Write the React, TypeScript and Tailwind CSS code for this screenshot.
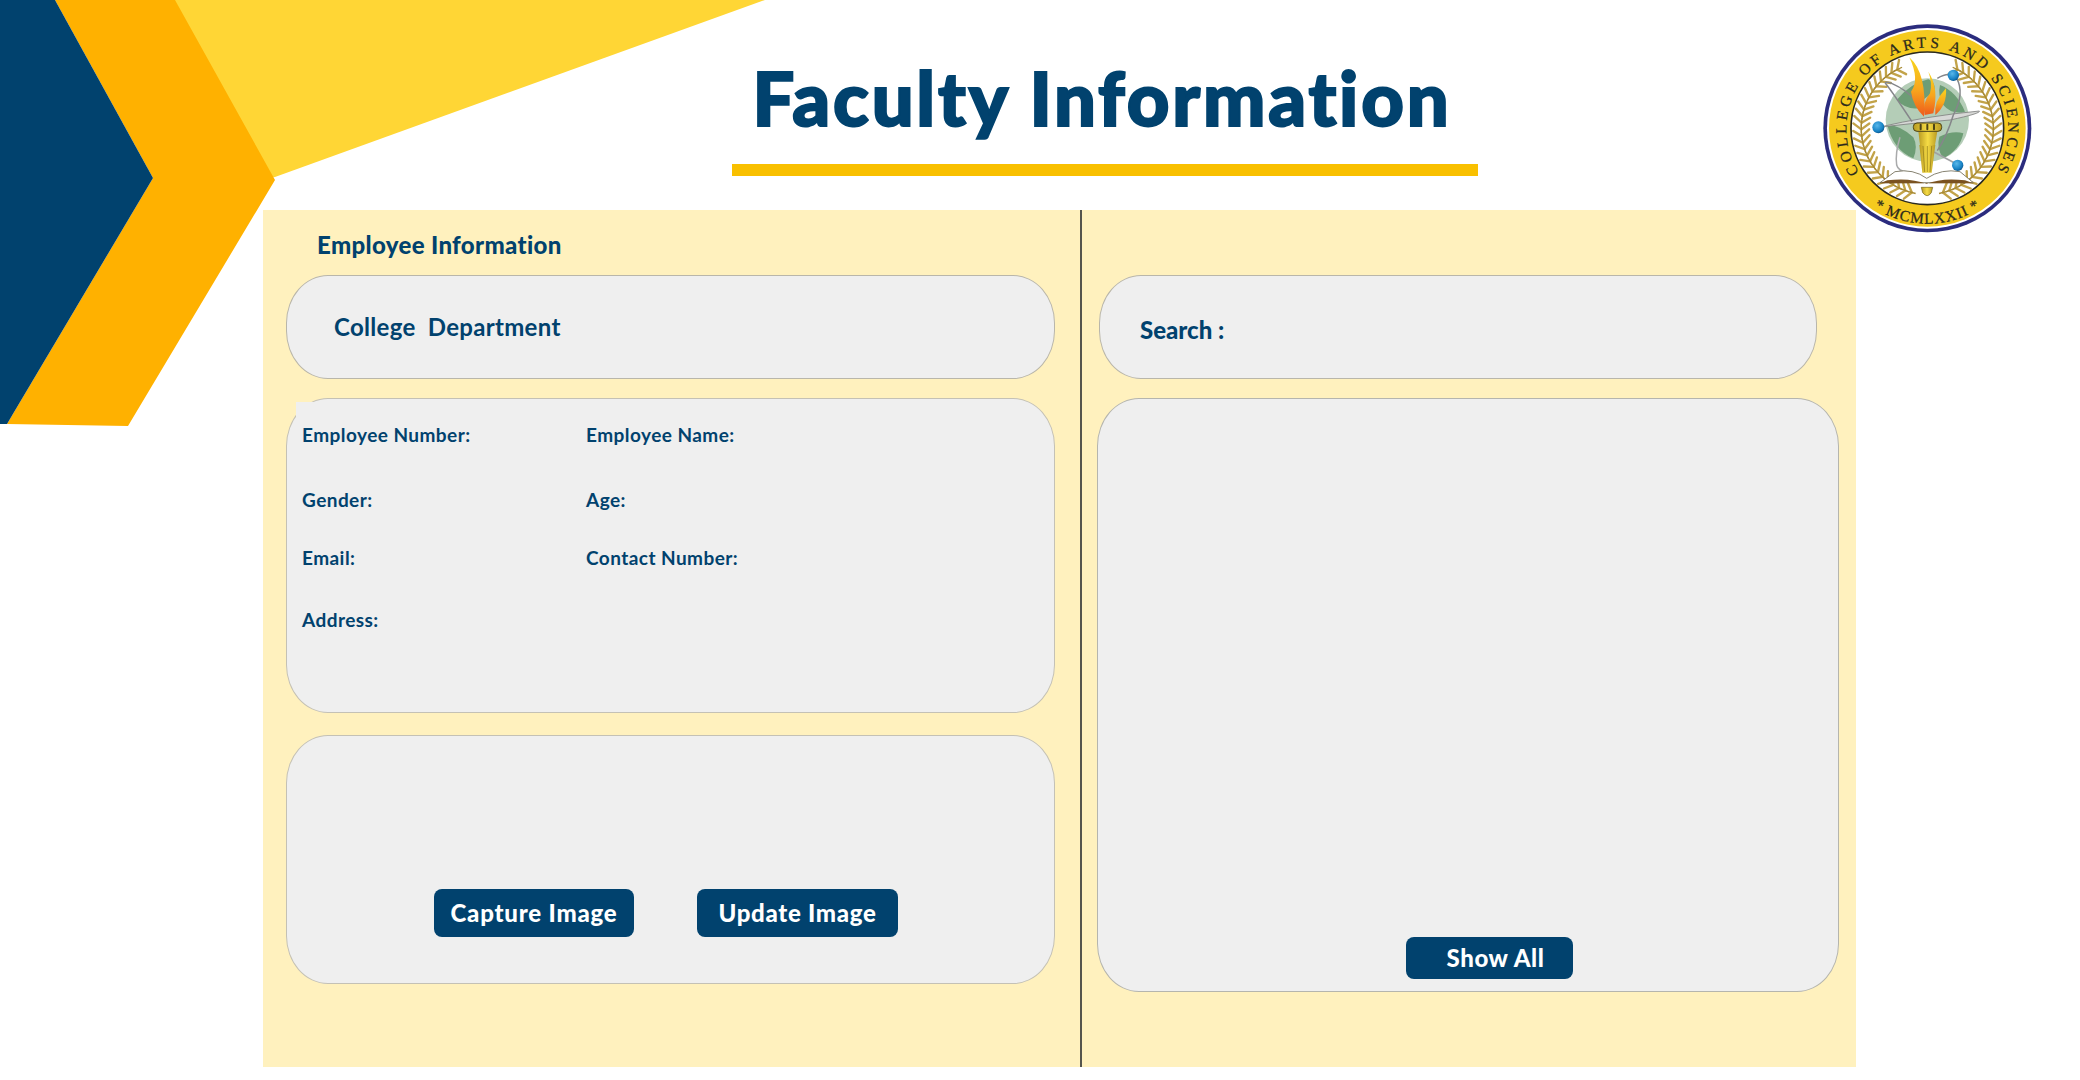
const NAVY = "#01426e";

function Logo() {
  const cx = 442, cy = 385;
  const leaves = (side: number) =>
    Array.from({ length: 25 }).map((_, i) => {
      const deg = -64 + i * 5.8;
      const a = (Math.PI / 180) * deg;
      const r = 198;
      const x = cx + side * r * Math.cos(a);
      const y = cy + r * Math.sin(a);
      return (
        <g key={i} transform={`translate(${x} ${y}) rotate(${side * deg})`}>
          <path d="M0 4 L-24 -14" stroke="#c2a349" strokeWidth="7" strokeLinecap="round" />
          <path d="M0 4 L24 -14" stroke="#c2a349" strokeWidth="7" strokeLinecap="round" />
          <path d="M0 -12 L0 16" stroke="#a88a35" strokeWidth="4" />
        </g>
      );
    });
  return (
    <svg viewBox="0 0 900 780" className="absolute left-[1780px] top-0 w-[300px] h-[260px]">
      <defs>
        <path id="logo-top" d="M 238 518 A 243 243 0 1 1 641 525" />
        <path id="logo-bottom" d="M 235 583 A 287 287 0 0 0 649 583" />
        <linearGradient id="logo-flame" x1="0" y1="0" x2="0" y2="1">
          <stop offset="0" stopColor="#f7d61e" />
          <stop offset="0.55" stopColor="#f8a51d" />
          <stop offset="1" stopColor="#ee5a1c" />
        </linearGradient>
        <linearGradient id="logo-gold" x1="0" y1="0" x2="1" y2="0">
          <stop offset="0" stopColor="#b89a22" />
          <stop offset="0.5" stopColor="#f6dc45" />
          <stop offset="1" stopColor="#b89a22" />
        </linearGradient>
        <radialGradient id="logo-ball" cx="0.4" cy="0.35" r="0.7">
          <stop offset="0" stopColor="#58b7ea" />
          <stop offset="0.7" stopColor="#1681c4" />
          <stop offset="1" stopColor="#0c4d80" />
        </radialGradient>
      </defs>
      <circle cx={cx} cy={cy} r="312" fill="#2b2c7e" />
      <circle cx={cx} cy={cy} r="301" fill="#fff" />
      <circle cx={cx} cy={cy} r="295" fill="#f5ca1e" />
      <circle cx={cx} cy={cy} r="229" fill="#fff" stroke="#2a2a20" strokeWidth="5" />
      <text fontFamily="'Liberation Serif', serif" fontSize="46" fontWeight="400" stroke="#2c2a1c" strokeWidth="0.8" fill="#2c2a1c" letterSpacing="10.8">
        <textPath href="#logo-top" startOffset="0">COLLEGE OF ARTS AND SCIENCES</textPath>
      </text>
      <text fontFamily="'Liberation Serif', serif" fontSize="46" fontWeight="400" stroke="#2c2a1c" strokeWidth="0.8" fill="#2c2a1c" letterSpacing="3" textAnchor="middle">
        <textPath href="#logo-bottom" startOffset="50%">*  MCMLXXII  *</textPath>
      </text>
      {leaves(-1)}
      {leaves(1)}
      <g transform="translate(210 150)">
        <circle cx="232" cy="210" r="125" fill="#b4cdb7" />
        <path d="M140 150 Q180 100 235 88 Q262 100 250 130 Q220 140 205 175 Q170 180 140 150z M112 225 Q150 225 190 262 Q205 290 190 325 Q130 300 112 225z M270 105 Q320 125 345 185 Q305 195 280 165 Q262 135 270 105z M268 260 Q310 240 340 250 Q330 300 280 325 Q258 295 268 260z" fill="#6d9d75" />
        <path d="M85 232 Q230 198 388 183 Q394 190 300 210 Q200 218 85 232z" fill="#d7d8d6" stroke="#80817f" strokeWidth="2.5" />
        <path d="M186 215 Q130 130 108 102 Q100 92 125 100 Q170 120 195 150" fill="none" stroke="#85868a" strokeWidth="4.5" />
        <path d="M252 306 L325 345" fill="none" stroke="#a0a1a3" strokeWidth="5" />
        <path d="M262 85 Q300 62 320 85 Q345 130 310 195 Q290 260 262 302" fill="none" stroke="#85868a" strokeWidth="4.5" />
        <path d="M150 262 Q135 310 140 345 Q145 365 172 365" fill="none" stroke="#a9aaab" strokeWidth="4.5" />
        <circle cx="310" cy="76" r="17" fill="url(#logo-ball)" />
        <circle cx="85" cy="232" r="18" fill="url(#logo-ball)" />
        <circle cx="323" cy="346" r="17" fill="url(#logo-ball)" />
        <path d="M178 22 Q232 70 222 200 Q190 170 183 125 Q210 90 178 22z" fill="url(#logo-flame)" />
        <path d="M235 65 Q268 115 250 190 L224 195 Q215 160 240 130 Q248 100 235 65z" fill="url(#logo-flame)" />
        <path d="M288 115 Q292 165 256 195 Q250 155 288 115z" fill="url(#logo-flame)" />
        <path d="M205 244 L262 244 L255 285 L210 285z" fill="url(#logo-gold)" />
        <path d="M208 285 L256 285 L245 368 L217 368z" fill="url(#logo-gold)" />
        <path d="M219 288 L224 366 M232 288 L232 366 M245 288 L240 366" stroke="#8a7418" strokeWidth="2" />
        <rect x="190" y="219" width="85" height="25" rx="11" fill="url(#logo-gold)" stroke="#4c4316" strokeWidth="3" />
        <path d="M212 224 V238 M232 224 V238 M252 224 V238" stroke="#4c4316" strokeWidth="6" strokeLinecap="round" />
        <path d="M135 365 Q190 355 230 385 Q275 355 330 365 L370 398 L90 398z" fill="#fff" stroke="#6f6a56" strokeWidth="2.5" />
        <path d="M90 400 L370 400 L345 391 Q275 382 230 402 Q180 382 112 391z" fill="#7a5220" />
        <path d="M214 412 L248 412 L244 428 Q232 446 218 428z" fill="url(#logo-gold)" stroke="#6e5f18" strokeWidth="2" />
      </g>
    </svg>
  );
}

function Chevrons() {
  return (
    <svg viewBox="0 0 800 440" className="absolute left-0 top-0 w-[800px] h-[440px]">
      <polygon points="165,0 765,0 275,177 270,178" fill="#ffd635" />
      <polygon points="55,0 175,0 275,180 128,426 7,424 153,178" fill="#ffb100" />
      <polygon points="0,0 55,0 153,178 7,424 0,424" fill={NAVY} />
    </svg>
  );
}

function Field({ label, className = "" }: { label: string; className?: string }) {
  return <div className={`text-[19px] leading-[30px] font-bold text-[#01426e] tracking-[0.45px] ${className}`}>{label}</div>;
}

export default function App() {
  return (
    <div className="relative w-[2080px] h-[1080px] overflow-hidden bg-white font-['Lato','Noto_Sans',sans-serif]">
      <Chevrons />
      <header className="relative h-[210px] pl-[732px]">
        <div className="flex flex-col w-[746px] items-center">
          <h1 className="mt-[56px] mr-[6px] h-[84px] text-[74px] leading-[84px] font-black text-[#01426e] tracking-[2.8px] [-webkit-text-stroke:2px_#01426e]">
            Faculty Information
          </h1>
          <div className="mt-[24px] h-[12px] w-full bg-[#f9c000]" />
        </div>
      </header>
      <main className="relative ml-[263px] w-[1593px] h-[857px] flex bg-[#fff1be]">
        <section className="w-[817px] pl-[23px] pt-[20px]">
          <h2 className="ml-[31px] h-[30px] text-[24px] leading-[30px] font-black text-[#01426e] tracking-[0.35px]">
            Employee Information
          </h2>
          <div className="mt-[15px] w-[769px] h-[104px] rounded-[42px/48px] border border-[#b9b6aa] bg-[#efefef] flex items-center pl-[47px]">
            <span className="text-[24px] font-bold text-[#01426e] tracking-[0.3px]">College&nbsp; Department</span>
          </div>
          <div className="relative mt-[19px] w-[769px] h-[315px] rounded-[42px/48px] border border-[#c4c1b5] bg-[#efefef] pl-[15px] pt-[21px]">
            <div className="absolute left-[9px] top-[3px] w-[24px] h-[24px] bg-[#efefef]" />
            <div className="relative grid grid-cols-[284px_1fr]">
              <Field label="Employee Number:" />
              <Field label="Employee Name:" />
              <Field label="Gender:" className="mt-[35px]" />
              <Field label="Age:" className="mt-[35px]" />
              <Field label="Email:" className="mt-[28px]" />
              <Field label="Contact Number:" className="mt-[28px]" />
              <Field label="Address:" className="mt-[32px]" />
            </div>
          </div>
          <div className="mt-[22px] w-[769px] h-[249px] rounded-[42px/48px] border border-[#c4c1b5] bg-[#efefef] flex items-end gap-[63px] pl-[147px] pb-[46px]">
            <button className="w-[200px] h-[48px] rounded-[8px] bg-[#01426e] text-white text-[24px] font-black tracking-[0.8px]">Capture Image</button>
            <button className="w-[201px] h-[48px] rounded-[8px] bg-[#01426e] text-white text-[24px] font-black tracking-[0.7px]">Update Image</button>
          </div>
        </section>
        <div className="w-[2px] bg-[#55554d]" />
        <section className="flex-1 pt-[65px]">
          <div className="ml-[17px] w-[718px] h-[104px] rounded-[42px/48px] border border-[#b9b6aa] bg-[#efefef] flex items-center pl-[40px] pt-[6px]">
            <span className="text-[24px] font-black text-[#01426e]">Search&nbsp;:</span>
          </div>
          <div className="mt-[19px] ml-[15px] w-[742px] h-[594px] rounded-[42px/48px] border border-[#b5b5ae] bg-[#efefef] flex items-end pl-[308px] pb-[12px]">
            <button className="w-[167px] h-[42px] rounded-[8px] bg-[#01426e] text-white text-[24px] font-black tracking-[0.6px] pl-[12px]">Show All</button>
          </div>
        </section>
      </main>
      <Logo />
    </div>
  );
}
